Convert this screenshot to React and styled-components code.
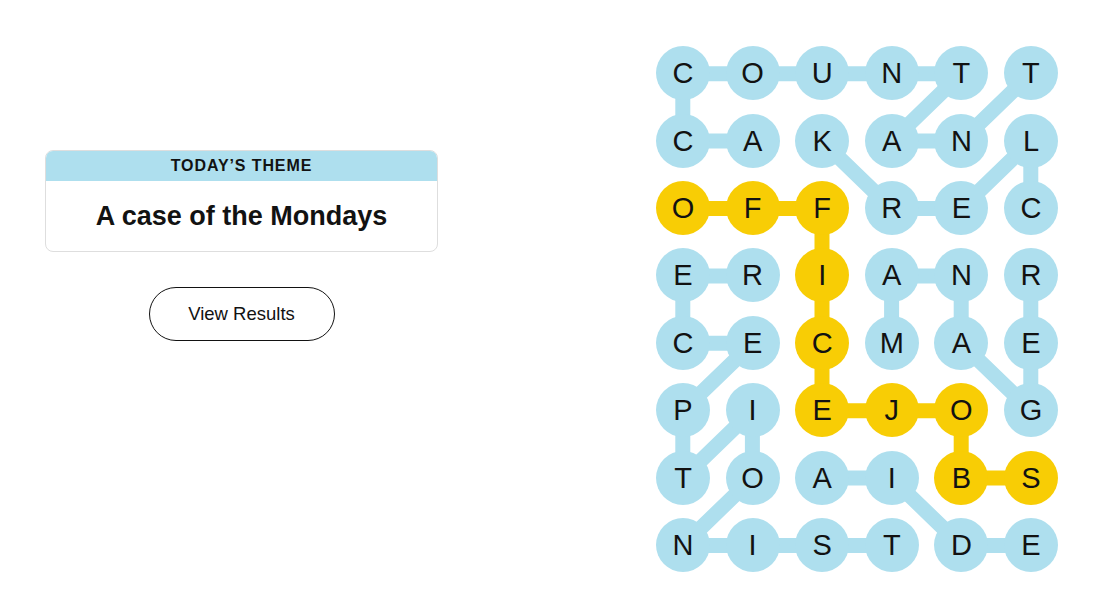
import React from 'react';
import styled, { createGlobalStyle } from 'styled-components';

const COL = 69.6;
const ROW = 67.4;
const COLS = 6;
const ROWS = 8;

const BLUE = '#aedfee';
const YELLOW = '#f8cd05';

const GlobalStyle = createGlobalStyle`
  html, body {
    margin: 0;
    padding: 0;
    background: #fff;
    font-family: 'Liberation Sans', Arial, sans-serif;
    color: #121212;
  }
`;

const Page = styled.div`
  display: flex;
  align-items: flex-start;
  width: 1109px;
  height: 602px;
  overflow: hidden;
`;

const LeftPanel = styled.div`
  width: 393px;
  margin: 150px 0 0 45px;
  display: flex;
  flex-direction: column;
  align-items: center;
  gap: 35px;
`;

const ThemeCard = styled.div`
  width: 100%;
  box-sizing: border-box;
  border: 1px solid #dedede;
  border-radius: 8px;
  overflow: hidden;
  display: flex;
  flex-direction: column;
`;

const ThemeHeader = styled.div`
  height: 30px;
  background-color: ${BLUE};
  display: flex;
  align-items: center;
  justify-content: center;
  & > span {
    font-size: 16px;
    font-weight: 700;
    letter-spacing: 0.9px;
    color: #121212;
  }
`;

const ThemeTitle = styled.div`
  height: 70px;
  display: flex;
  align-items: center;
  justify-content: center;
  font-size: 27px;
  font-weight: 700;
  color: #121212;
`;

const ResultsButton = styled.button`
  width: 186px;
  height: 54px;
  border: 1px solid #121212;
  border-radius: 27px;
  background: #fff;
  font-family: 'Liberation Sans', Arial, sans-serif;
  font-size: 18.5px;
  color: #121212;
  cursor: pointer;
`;

const Board = styled.div`
  position: relative;
  margin: 39.6px 0 0 210.2px;
  width: ${COL * COLS}px;
  height: ${ROW * ROWS}px;
`;

const PathLayer = styled.svg`
  position: absolute;
  inset: 0;
  width: 100%;
  height: 100%;
`;

const Grid = styled.div`
  position: relative;
  display: grid;
  grid-template-columns: repeat(${COLS}, ${COL}px);
  grid-template-rows: repeat(${ROWS}, ${ROW}px);
`;

const Cell = styled.div`
  display: flex;
  align-items: center;
  justify-content: center;
`;

const Letter = styled.div`
  width: 54px;
  height: 54px;
  border-radius: 50%;
  background-color: ${(p) => (p.$found ? YELLOW : BLUE)};
  display: flex;
  align-items: center;
  justify-content: center;
  font-size: 29px;
  color: #121212;
  padding-top: 1px;
  box-sizing: border-box;
`;

const letters = [
  'COUNTT',
  'CAKANL',
  'OFFREC',
  'ERIANR',
  'CECMAE',
  'PIEJOG',
  'TOAIBS',
  'NISTDE',
];

const words = [
  [[1, 1], [0, 1], [0, 0], [1, 0], [2, 0], [3, 0], [4, 0], [3, 1], [4, 1], [5, 0]],
  [[5, 2], [5, 1], [4, 2], [3, 2], [2, 1]],
  [[1, 3], [0, 3], [0, 4], [1, 4], [0, 5], [0, 6], [1, 5], [1, 6], [0, 7], [1, 7], [2, 7], [3, 7]],
  [[3, 4], [3, 3], [4, 3], [4, 4], [5, 5], [5, 4], [5, 3]],
  [[2, 6], [3, 6], [4, 7], [5, 7]],
];

const spangram = [[0, 2], [1, 2], [2, 2], [2, 3], [2, 4], [2, 5], [3, 5], [4, 5], [4, 6], [5, 6]];

const toPoints = (word) =>
  word.map(([c, r]) => `${COL / 2 + c * COL},${ROW / 2 + r * ROW}`).join(' ');

const isSpangram = (c, r) => spangram.some(([x, y]) => x === c && y === r);

function App() {
  return (
    <>
      <GlobalStyle />
      <Page>
        <LeftPanel>
          <ThemeCard>
            <ThemeHeader>
              <span>TODAY’S THEME</span>
            </ThemeHeader>
            <ThemeTitle>A case of the Mondays</ThemeTitle>
          </ThemeCard>
          <ResultsButton>View Results</ResultsButton>
        </LeftPanel>
        <Board>
          <PathLayer viewBox={`0 0 ${COL * COLS} ${ROW * ROWS}`}>
            {words.map((w, i) => (
              <polyline key={i} points={toPoints(w)} fill="none" stroke={BLUE} strokeWidth="15" strokeLinejoin="round" />
            ))}
            <polyline points={toPoints(spangram)} fill="none" stroke={YELLOW} strokeWidth="15" strokeLinejoin="round" />
          </PathLayer>
          <Grid>
            {letters.map((row, r) =>
              row.split('').map((ch, c) => (
                <Cell key={`${r}-${c}`}>
                  <Letter $found={isSpangram(c, r)}>{ch}</Letter>
                </Cell>
              ))
            )}
          </Grid>
        </Board>
      </Page>
    </>
  );
}

export default App;
